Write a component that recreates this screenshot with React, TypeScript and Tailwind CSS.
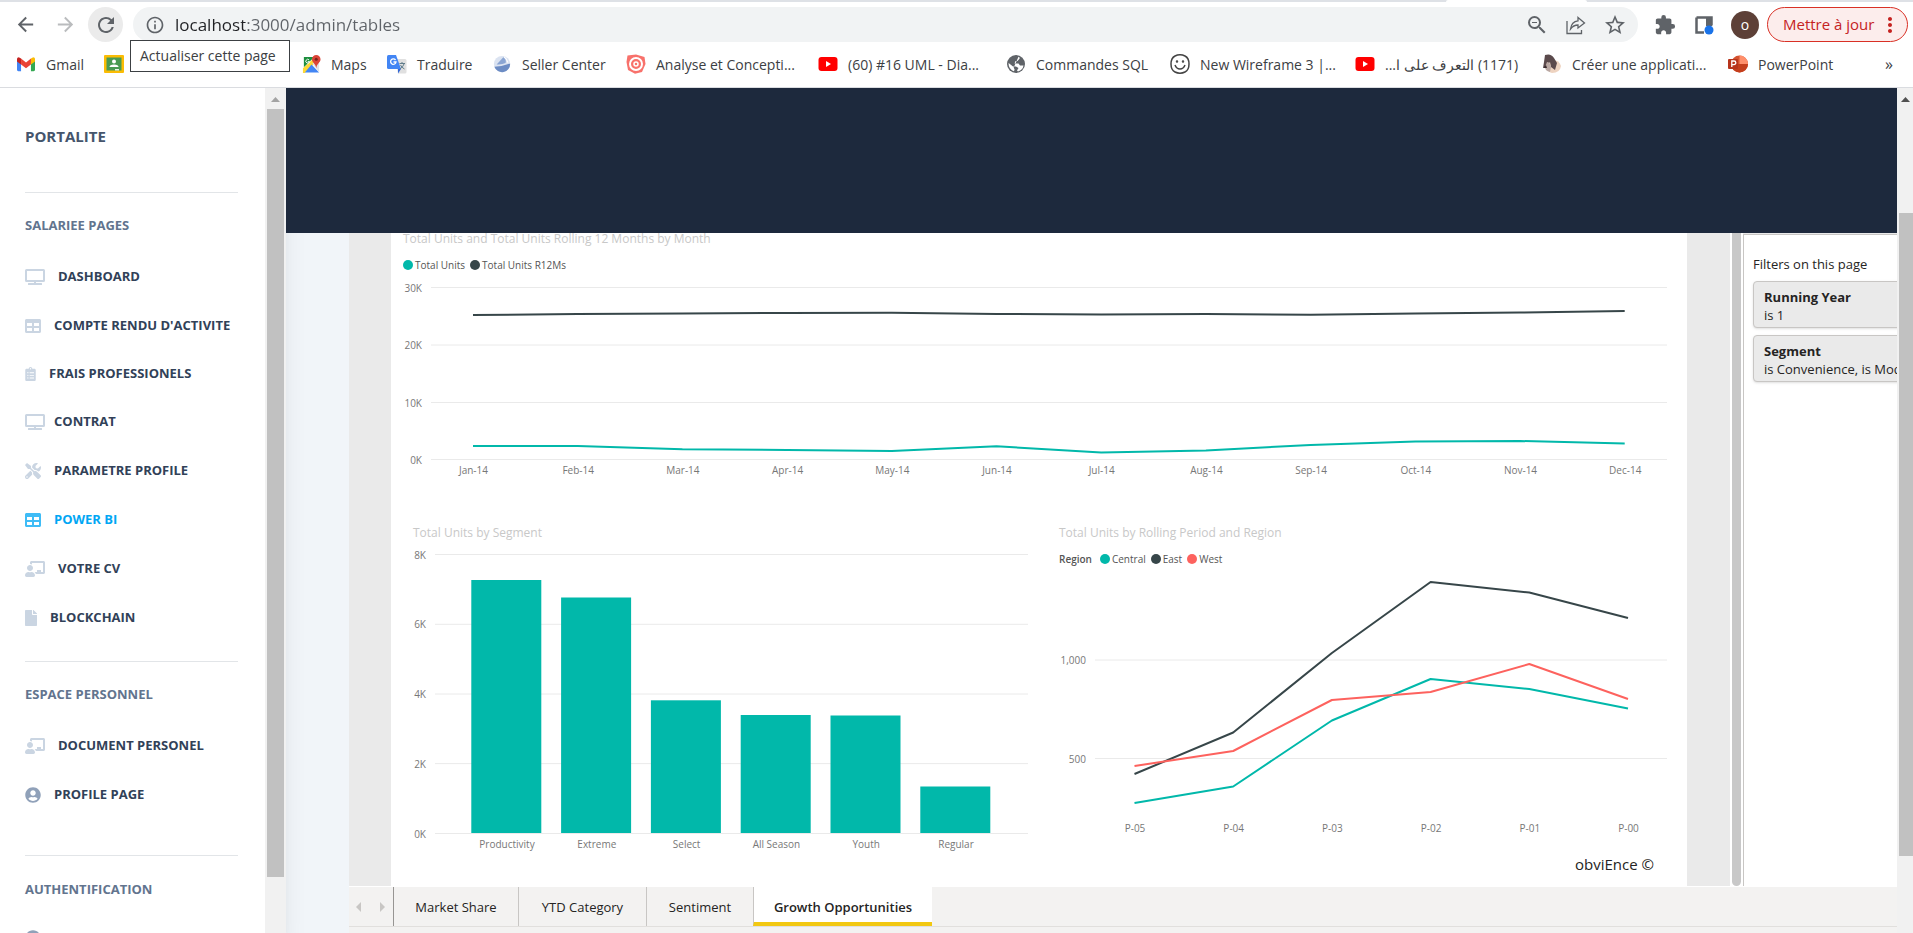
import type { ReactNode } from "react";
import type { IconType } from "react-icons";
import {
  FaChalkboardTeacher,
  FaClipboardList,
  FaFile,
  FaTable,
  FaTools,
  FaTv,
  FaUserCircle,
} from "react-icons/fa";
import {
  MdArrowBack,
  MdArrowForward,
  MdExtension,
  MdInfoOutline,
  MdMoreVert,
  MdOutlineZoomOut,
  MdRefresh,
  MdStarBorder,
} from "react-icons/md";

const TEAL = "#01b8aa";
const DARK = "#374649";
const RED = "#fd625e";

/* ---------- Browser chrome ---------- */

function GmailIcon() {
  return (
    <svg viewBox="0 0 20 16" className="h-4 w-[18px]">
      <path d="M0 2v12.5Q0 16 1.500 16H4.500V6z" fill="#4285f4" />
      <path d="M20 2v12.500Q20 16 18.500 16H15.500V6z" fill="#34a853" />
      <path d="M0 2.500Q0 .5 2 .5L4.500 2V8.500L0 5.200z" fill="#c5221f" />
      <path d="M15.500 2 18 .5Q20 .5 20 2.500V5.200L15.500 8.500z" fill="#fbbc04" />
      <path d="M4.500 2 10 6.200 15.500 2V8.500L10 12.600 4.500 8.500z" fill="#ea4335" />
    </svg>
  );
}

function ClassroomIcon() {
  return (
    <svg viewBox="0 0 20 20" className="h-5 w-5">
      <rect x="0" y="1" width="20" height="18" rx="1" fill="#fbbc04" />
      <rect x="2.500" y="3.500" width="15" height="13" fill="#4a9a52" />
      <circle cx="10" cy="7.500" r="2" fill="#fff" />
      <path d="M5.500 13q0-2.500 4.500-2.500t4.500 2.500z" fill="#fff" />
      <rect x="11" y="15" width="4" height="1.500" fill="#e8f5e9" />
    </svg>
  );
}

function MapsIcon() {
  return (
    <svg viewBox="0 0 20 20" className="h-[19px] w-[19px]">
      <path d="M2 2h11L2 13z" fill="#1e8e3e" />
      <path d="M1 14 14 2l3 3L3 19H1z" fill="#fdd835" />
      <path d="M10 10 18 18.500H3z" fill="#4285f4" />
      <path d="M11 9 18 5v13z" fill="#dfe1e5" />
      <path d="M15 0a4.500 4.500 0 0 1 4.500 4.500C19.500 8 15.500 9 15 14c-.5-5-4.500-6-4.500-9.500A4.500 4.500 0 0 1 15 0z" fill="#db4437" />
      <circle cx="15" cy="4.500" r="1.600" fill="#7b231c" />
      <path d="M7.500 5.200A2 2 0 1 0 8 7H6" fill="none" stroke="#fff" />
    </svg>
  );
}

function TranslateIcon() {
  return (
    <svg viewBox="0 0 20 20" className="h-5 w-5">
      <path d="M8 5h10q1.500 0 1.500 1.500V18q0 1.500-1.500 1.500H11z" fill="#e0e0e0" />
      <path d="M1.500 1H9l5 14H1.500Q0 15 0 13.500v-11Q0 1 1.500 1z" fill="#4285f4" />
      <path d="M11 15h3l-3 4.500z" fill="#3367d6" />
      <path d="M8.500 6A2.700 2.700 0 1 0 9 8H6.500" fill="none" stroke="#fff" strokeWidth="1.300" />
      <path d="M12.500 9.500H18M15 8v1.500M17 10q-1 3-4 5M13.500 11q1 2.500 4 4" fill="none" stroke="#607d8b" />
    </svg>
  );
}

function SellerIcon() {
  return (
    <svg viewBox="0 0 20 20" className="h-[18px] w-[18px]">
      <circle cx="10" cy="10" r="9" fill="#dbe3f1" />
      <path d="M1.500 13Q10 13 19 9.500A9 9 0 0 1 1.500 13z" fill="#6c8cc4" />
      <path d="M4 10.500 12 2q3 3 2 7-4 2-10 1.500z" fill="#8aa5d3" />
      <path d="M12 2q4 3 4.500 6.500" fill="none" stroke="#fff" strokeWidth="1.200" />
    </svg>
  );
}

function TargetIcon() {
  return (
    <svg viewBox="0 0 20 20" className="h-5 w-5">
      <path d="M1.500 1.500 10 .5 18.500 3 19.500 10 16 18l-7 1.800L2 16 .5 8z" fill="#f8716b" />
      <circle cx="10" cy="10" r="6" fill="none" stroke="#fff" strokeWidth="2" />
      <circle cx="10" cy="10" r="2" fill="none" stroke="#fff" strokeWidth="1.500" />
    </svg>
  );
}

function YoutubeIcon() {
  return (
    <svg viewBox="0 0 20 20" className="h-5 w-5">
      <rect x=".5" y="3" width="19" height="14" rx="3" fill="#f00" />
      <path d="M8 7v6l5-3z" fill="#fff" />
    </svg>
  );
}

function GlobeIcon() {
  return (
    <svg viewBox="0 0 20 20" className="h-5 w-5">
      <circle cx="10" cy="10" r="9" fill="#5f6368" />
      <path
        d="M12.500 2.800q1.500.5 1 2L11.500 7H9.500L8.500 9.500h4l1.500 2h3.500Q16.800 16 12 17.600l-1-1 1.500-2.600-2.500-1.500H7L2.600 9Q2.200 14.500 7.500 17.200l1.200-1.200-1-2.500"
        fill="#fff"
      />
    </svg>
  );
}

function SmileyIcon() {
  return (
    <svg viewBox="0 0 20 20" className="h-5 w-5" fill="none" stroke="#444" strokeWidth="1.500">
      <path d="M5 2Q10-.5 15 2q4 2 4 8t-4 8q-5 2.500-10 0-4-2-4-8t4-8z" />
      <path d="M5 11q1.500 4 5 4t5-4" />
      <circle cx="7" cy="7.500" r=".5" fill="#444" />
      <circle cx="13" cy="7.500" r=".5" fill="#444" />
    </svg>
  );
}

function PuppyIcon() {
  return (
    <svg viewBox="0 0 20 20" className="h-5 w-5">
      <path d="M9 6q8-1 10 6-1 7-9 7-5-1-4-7z" fill="#eed3c0" />
      <path d="M3 1q6-2 9 3l3 5-2 7-4-3-1-5-3 4-4 2 1-6z" fill="#5b4a4c" />
      <path d="M5 8q3 0 4 5l-1 5q-5-1-5-5z" fill="#b9a7a2" />
      <path d="M1 14 4 11l1 3z" fill="#3b2d30" />
    </svg>
  );
}

function PowerPointIcon() {
  return (
    <svg viewBox="0 0 20 20" className="h-5 w-5">
      <circle cx="11.500" cy="10" r="8.500" fill="#d35230" />
      <path d="M11.500 1.500A8.500 8.500 0 0 1 20 10h-8.500z" fill="#ff8f6b" />
      <path d="M3 10h17a8.500 8.500 0 0 1-17 0z" fill="#c43e1c" />
      <rect x="0" y="5" width="10" height="10" rx="1" fill="#b7341b" />
      <path d="M3.800 13V7h2.200a1.800 1.800 0 0 1 0 3.600H3.800" fill="none" stroke="#fff" strokeWidth="1.300" />
    </svg>
  );
}

interface Bookmark {
  label: string;
  icon: ReactNode;
  width: string;
  rtl?: boolean;
}

const bookmarks: Bookmark[] = [
  { label: "Maps", icon: <MapsIcon />, width: "w-[86px]" },
  { label: "Traduire", icon: <TranslateIcon />, width: "w-[105px]" },
  { label: "Seller Center", icon: <SellerIcon />, width: "w-[134px]" },
  { label: "Analyse et Concepti...", icon: <TargetIcon />, width: "w-[192px]" },
  { label: "(60) #16 UML - Dia...", icon: <YoutubeIcon />, width: "w-[188px]" },
  { label: "Commandes SQL", icon: <GlobeIcon />, width: "w-[164px]" },
  { label: "New Wireframe 3 |...", icon: <SmileyIcon />, width: "w-[185px]" },
  { label: "(1171) التعرف على ا...", icon: <YoutubeIcon />, width: "w-[187px]", rtl: true },
  { label: "Créer une applicati...", icon: <PuppyIcon />, width: "w-[186px]" },
  { label: "PowerPoint", icon: <PowerPointIcon />, width: "w-[110px]" },
];

function BookmarkLink({ label, icon, width, rtl }: Bookmark) {
  return (
    <a href="#" className={`flex shrink-0 items-center gap-[10px] whitespace-nowrap ${width}`}>
      <span className="flex w-5 shrink-0 justify-center">{icon}</span>
      <span dir={rtl ? "rtl" : "ltr"}>{label}</span>
    </a>
  );
}

function BrowserChrome() {
  return (
    <header className="relative shrink-0 border-b border-[#dadce0] bg-white text-[#3c4043]">
      <div className="flex h-[2px] bg-[#dee1e6]">
        <div className="ml-[1446px] w-[141px] rounded-t bg-white" />
      </div>
      <div className="flex h-[45px] items-center pl-[14px] pr-[5px]">
        <button aria-label="Précédent" className="text-[#5f6368]">
          <MdArrowBack className="h-[23px] w-[23px]" />
        </button>
        <button aria-label="Suivant" className="ml-[17px] text-[#babcbe]">
          <MdArrowForward className="h-[23px] w-[23px]" />
        </button>
        <button
          aria-label="Actualiser"
          className="ml-[11px] flex h-[35px] w-[35px] items-center justify-center rounded-full bg-[#ebebeb] text-[#5f6368]"
        >
          <MdRefresh className="h-6 w-6" />
        </button>
        <div className="ml-[10px] flex h-[35px] flex-1 items-center rounded-full bg-[#f1f3f4] pl-3 pr-[11px] text-[#5f6368]">
          <MdInfoOutline className="h-5 w-5 shrink-0" />
          <input
            aria-label="Adresse"
            type="text"
            defaultValue="localhost:3000/admin/tables"
            className="ml-[10px] flex-1 bg-[linear-gradient(90deg,#202124_70px,#5f6368_70px)] bg-clip-text text-[17px] text-transparent outline-none"
          />
          <div className="flex items-center gap-[17px]">
            <MdOutlineZoomOut className="h-6 w-6" />
            <svg viewBox="0 0 20 20" className="h-5 w-5" fill="none" stroke="#5f6368" strokeWidth="1.300">
              <path d="M1 6v12.500h14.500V15" />
              <path d="M12 2.500 18.500 8 12 13v-3Q7.500 10 4.500 14 5.500 6.500 12 5.800z" />
            </svg>
            <MdStarBorder className="h-6 w-6" />
          </div>
        </div>
        <div className="ml-4 flex items-center text-[#5f6368]">
          <MdExtension className="h-[22px] w-[22px]" />
          <svg viewBox="0 0 20 20" className="ml-[18px] h-5 w-5">
            <path d="M2.500 2.500h15v8M10 17.500H2.500v-15" fill="none" stroke="#5f6368" strokeWidth="2.500" />
            <path d="M12 2h6v9h-6z" fill="#5f6368" />
            <circle cx="15" cy="15" r="4.500" fill="#1a73e8" />
          </svg>
          <button
            aria-label="Profil"
            className="ml-[17px] flex h-7 w-7 items-center justify-center rounded-full bg-[#5d4037] text-[14px] text-white"
          >
            o
          </button>
        </div>
        <button className="ml-2 flex h-[35px] w-[141px] items-center justify-between rounded-full border border-[#d93025] bg-[#fcedec] pl-[15px] pr-[5px] text-[15px] text-[#c5221f]">
          Mettre à jour
          <MdMoreVert className="h-6 w-6" />
        </button>
      </div>
      <nav className="flex h-10 items-center pb-[6px] pl-4 pr-5 text-[14px]">
        <BookmarkLink label="Gmail" icon={<GmailIcon />} width="w-[88px]" />
        <a href="#" aria-label="Classroom" className="w-[197px] shrink-0">
          <ClassroomIcon />
        </a>
        <div className="flex">
          {bookmarks.map((b) => (
            <BookmarkLink key={b.label} {...b} />
          ))}
        </div>
        <button aria-label="Autres favoris" className="ml-auto text-[16px]">
          »
        </button>
      </nav>
      <div
        role="tooltip"
        className="absolute left-[130px] top-10 flex h-8 w-40 border border-[#3c4043] bg-white pl-[9px] pt-1 text-[14px]"
      >
        Actualiser cette page
      </div>
    </header>
  );
}

/* ---------- Sidebar ---------- */

interface NavItem {
  label: string;
  Icon: IconType;
  size: string;
  height: string;
  active?: boolean;
  tone?: string;
}

const salaryItems: NavItem[] = [
  { label: "DASHBOARD", Icon: FaTv, size: "w-5 h-5 mr-[13px]", height: "h-[49px]" },
  { label: "COMPTE RENDU D'ACTIVITE", Icon: FaTable, size: "w-4 h-4 mr-[13px]", height: "h-[49px]" },
  { label: "FRAIS PROFESSIONELS", Icon: FaClipboardList, size: "w-[11px] h-[14px] mr-[13px]", height: "h-12" },
  { label: "CONTRAT", Icon: FaTv, size: "w-5 h-5 mr-[9px]", height: "h-12" },
  { label: "PARAMETRE PROFILE", Icon: FaTools, size: "w-4 h-4 mr-[13px]", height: "h-[49px]" },
  { label: "POWER BI", Icon: FaTable, size: "w-4 h-4 mr-[13px]", height: "h-[49px]", active: true },
  { label: "VOTRE CV", Icon: FaChalkboardTeacher, size: "w-5 h-5 mr-[13px]", height: "h-[49px]" },
  { label: "BLOCKCHAIN", Icon: FaFile, size: "w-3 h-4 mr-[13px]", height: "h-[50px]" },
];

const personalItems: NavItem[] = [
  { label: "DOCUMENT PERSONEL", Icon: FaChalkboardTeacher, size: "w-5 h-5 mr-[13px]", height: "h-[49px]" },
  { label: "PROFILE PAGE", Icon: FaUserCircle, size: "w-4 h-4 mr-[13px]", height: "h-[49px]", tone: "text-slate-400" },
];

function NavList({ items }: { items: NavItem[] }) {
  return (
    <ul>
      {items.map(({ label, Icon, size, height, active, tone }) => (
        <li key={label}>
          <a
            href="#"
            className={`flex items-center whitespace-nowrap text-[13px] font-bold ${height} ${
              active ? "text-sky-500" : "text-slate-700"
            }`}
          >
            <Icon className={`shrink-0 ${size} ${active ? "opacity-75" : tone ?? "text-slate-300"}`} />
            {label}
          </a>
        </li>
      ))}
    </ul>
  );
}

function SectionTitle({ children }: { children: ReactNode }) {
  return <h6 className="h-6 text-[13px] font-bold leading-6 text-slate-500">{children}</h6>;
}

function Sidebar() {
  return (
    <aside className="z-10 flex w-[286px] shrink-0 overflow-hidden bg-white shadow-xl">
      <div className="flex-1 overflow-hidden pl-[25px] pr-[27px]">
        <a href="#" className="mt-9 block h-6 text-[15px] font-bold leading-6 text-slate-600">
          PORTALITE
        </a>
        <hr className="mt-11 border-[#e2e5e8]" />
        <div className="mt-5">
          <SectionTitle>SALARIEE PAGES</SectionTitle>
        </div>
        <div className="mt-[15px]">
          <NavList items={salaryItems} />
        </div>
        <hr className="mt-[18px] border-[#e2e5e8]" />
        <div className="mt-5">
          <SectionTitle>ESPACE PERSONNEL</SectionTitle>
        </div>
        <div className="mt-[15px]">
          <NavList items={personalItems} />
        </div>
        <hr className="mt-9 border-[#e2e5e8]" />
        <div className="mt-[21px]">
          <SectionTitle>AUTHENTIFICATION</SectionTitle>
        </div>
        <FaUserCircle className="mt-[29px] h-4 w-4 text-slate-400" />
      </div>
      <div className="flex w-[21px] flex-col items-center bg-[#f1f1f1]">
        <svg viewBox="0 0 9 5" className="mt-[9px] h-[5px] w-[9px]">
          <path d="M0 5 4.500 0 9 5z" fill="#a3a3a3" />
        </svg>
        <div className="mb-14 mt-[7px] w-[17px] flex-1 bg-[#c1c1c1]" />
      </div>
    </aside>
  );
}

/* ---------- Report ---------- */

function Legend({ title, entries }: { title?: string; entries: [string, string][] }) {
  return (
    <div className="flex h-5 items-center gap-[5px] whitespace-nowrap text-[10px] text-[#555]">
      {title && <span className="mr-[3px] font-semibold">{title}</span>}
      {entries.map(([label, color]) => (
        <span key={label} className="flex items-center gap-[2px]">
          <svg viewBox="0 0 10 10" className="h-[10px] w-[10px]">
            <circle cx="5" cy="5" r="5" fill={color} />
          </svg>
          {label}
        </span>
      ))}
    </div>
  );
}

function ChartTitle({ children }: { children: ReactNode }) {
  return <h3 className="h-5 whitespace-nowrap text-[12px] leading-5 text-[#c8c8c8]">{children}</h3>;
}

const axisText = "fill-[#777] text-[10px]";

interface PlotProps {
  label: string;
  height: number;
  width: number;
  ticks: [string, number][];
  gridFrom: number;
  gridTo: number;
  categories: string[];
  firstX: number;
  stepX: number;
  labelY: number;
  children: ReactNode;
}

function Plot(p: PlotProps) {
  return (
    <svg role="img" aria-label={p.label} viewBox={`0 0 ${p.width} ${p.height}`} className="block w-full overflow-visible">
      {p.ticks.map(([text, y]) => (
        <g key={text}>
          <path d={`M${p.gridFrom} ${y}H${p.gridTo}`} stroke="#eaeaea" />
          <text x={p.gridFrom - 9} y={y + 4} textAnchor="end" className={axisText}>
            {text}
          </text>
        </g>
      ))}
      {p.children}
      {p.categories.map((text, i) => (
        <text key={text} x={p.firstX + i * p.stepX} y={p.labelY} textAnchor="middle" className={axisText}>
          {text}
        </text>
      ))}
    </svg>
  );
}

function Series({ ys, x, step, color }: { ys: number[]; x: number; step: number; color: string }) {
  const points = ys.map((y, i) => `${x + i * step},${y}`).join(" ");
  return <polyline points={points} fill="none" stroke={color} strokeWidth="2" strokeLinejoin="round" />;
}

const months = ["Jan", "Feb", "Mar", "Apr", "May", "Jun", "Jul", "Aug", "Sep", "Oct", "Nov", "Dec"].map((m) => `${m}-14`);

function MonthlyChart() {
  return (
    <Plot
      label="Total Units by month"
      width={1272}
      height={200}
      ticks={[["30K", 8.5], ["20K", 66], ["10K", 123.5], ["0K", 180.5]]}
      gridFrom={28}
      gridTo={1264}
      categories={months}
      firstX={70.5}
      stepX={104.7}
      labelY={195}
    >
      <Series x={70} step={104.7} color={DARK} ys={[36, 35, 34.5, 34, 33.7, 35, 35.4, 35, 35.7, 34.5, 33.5, 32]} />
      <Series x={70} step={104.7} color={TEAL} ys={[167, 167, 170.2, 171, 172, 167.2, 173.6, 171.4, 166, 162.4, 162, 164.5]} />
    </Plot>
  );
}

const segmentTops = [37, 54.5, 157.3, 172, 172.5, 243.5];

function SegmentChart() {
  return (
    <Plot
      label="Total Units by segment"
      width={616}
      height={306}
      ticks={[["8K", 11.5], ["6K", 81.3], ["4K", 151], ["2K", 220.6], ["0K", 290.5]]}
      gridFrom={22}
      gridTo={615}
      categories={["Productivity", "Extreme", "Select", "All Season", "Youth", "Regular"]}
      firstX={94}
      stepX={89.8}
      labelY={305}
    >
      {segmentTops.map((top, i) => (
        <rect key={top} x={58.3 + i * 89.8} y={top} width="70" height={290 - top} fill={TEAL} />
      ))}
    </Plot>
  );
}

function RegionChart() {
  return (
    <Plot
      label="Total Units by rolling period and region"
      width={616}
      height={271}
      ticks={[["1,000", 91], ["500", 189.5]]}
      gridFrom={36}
      gridTo={608}
      categories={["P-05", "P-04", "P-03", "P-02", "P-01", "P-00"]}
      firstX={76}
      stepX={98.7}
      labelY={263}
    >
      <Series x={75.5} step={98.7} color={TEAL} ys={[234, 217.5, 151.5, 110, 120, 139.5]} />
      <Series x={75.5} step={98.7} color={DARK} ys={[205, 163.5, 84, 13, 23.5, 49]} />
      <Series x={75.5} step={98.7} color={RED} ys={[197, 182, 131, 123, 95, 130]} />
    </Plot>
  );
}

function ReportPage() {
  return (
    <div className="flex-1 bg-white px-3">
      <div className="-mt-1">
        <ChartTitle>Total Units and Total Units Rolling 12 Months by Month</ChartTitle>
      </div>
      <div className="mb-1 mt-[6px]">
        <Legend entries={[["Total Units", TEAL], ["Total Units R12Ms", DARK]]} />
      </div>
      <MonthlyChart />
      <div className="mt-11 grid grid-cols-2 gap-[30px] pl-[10px]">
        <div>
          <ChartTitle>Total Units by Segment</ChartTitle>
          <SegmentChart />
        </div>
        <div>
          <ChartTitle>Total Units by Rolling Period and Region</ChartTitle>
          <div className="mt-[6px]">
            <Legend title="Region" entries={[["Central", TEAL], ["East", DARK], ["West", RED]]} />
          </div>
          <RegionChart />
        </div>
      </div>
      <p className="mt-[3px] pr-[21px] text-right text-[15px] leading-6 text-[#252423]">obviEnce ©</p>
    </div>
  );
}

function FilterCard({ name, value }: { name: string; value: string }) {
  return (
    <div className="mb-[7px] h-[47px] w-[220px] rounded-sm border border-[#c8c6c4] bg-[#eaeaea] pl-[10px] pt-[6px] text-[13px] leading-[18px] text-[#252423] shadow-sm">
      <div className="font-bold">{name}</div>
      <div className="truncate">{value}</div>
    </div>
  );
}

function FiltersPane() {
  return (
    <div className="mt-px w-[154px] shrink-0 overflow-hidden border-l border-t border-[#c8c6c4] bg-white pl-[9px] pt-[19px]">
      <h2 className="mb-[7px] whitespace-nowrap text-[13px] leading-5 text-[#252423]">Filters on this page</h2>
      <FilterCard name="Running Year" value="is 1" />
      <FilterCard name="Segment" value="is Convenience, is Moderation" />
    </div>
  );
}

const tabs = [
  { label: "Market Share", width: "w-[125px]" },
  { label: "YTD Category", width: "w-32" },
  { label: "Sentiment", width: "w-[107px]" },
];

function PageTabs() {
  return (
    <div className="shrink-0 border-t border-white bg-[#f3f2f1] pb-[6px]">
      <div className="flex h-10 border-b border-[#e1dfdd] text-[13px] text-[#252423]">
        <div className="flex w-11 items-center justify-between pl-[7px] pr-2">
          <button aria-label="Page précédente">
            <svg viewBox="0 0 5 10" className="h-[10px] w-[5px]">
              <path d="M5 0v10L0 5z" fill="#c8c6c4" />
            </svg>
          </button>
          <button aria-label="Page suivante">
            <svg viewBox="0 0 5 10" className="h-[10px] w-[5px]">
              <path d="M0 0v10l5-5z" fill="#c8c6c4" />
            </svg>
          </button>
        </div>
        {tabs.map((t, i) => (
          <button key={t.label} className={`border-l pt-[2px] ${i === 0 ? "border-[#979593]" : "border-[#c8c6c4]"} ${t.width}`}>
            {t.label}
          </button>
        ))}
        <button className="w-[179px] border-b-4 border-l border-b-[#f2c811] border-l-[#c8c6c4] bg-white pt-[6px] font-semibold">
          Growth Opportunities
        </button>
      </div>
    </div>
  );
}

function Report() {
  return (
    <div className="ml-[63px] flex min-h-0 flex-1 flex-col">
      <div className="flex min-h-0 flex-1 overflow-hidden bg-[#eaeaea]">
        <div className="w-[42px] shrink-0" />
        <ReportPage />
        <div className="w-[43px] shrink-0" />
        <div className="flex w-[13px] shrink-0 justify-center bg-white">
          <div className="w-[9px] rounded-b-full bg-[#c8c8c8]" />
        </div>
        <FiltersPane />
      </div>
      <PageTabs />
    </div>
  );
}

function WindowScrollbar() {
  return (
    <div className="flex w-4 shrink-0 flex-col items-end bg-[#f1f1f1]">
      <svg viewBox="0 0 9 5" className="mr-[3px] mt-[9px] h-[5px] w-[9px]">
        <path d="M0 5 4.500 0 9 5z" fill="#505050" />
      </svg>
      <div className="mb-[77px] mt-[111px] w-[14px] flex-1 bg-[#c1c1c1]" />
    </div>
  );
}

export default function App() {
  return (
    <div className="flex h-screen flex-col overflow-hidden font-['Open_Sans','Noto_Sans',sans-serif]">
      <BrowserChrome />
      <div className="flex min-h-0 flex-1">
        <Sidebar />
        <main className="flex min-w-0 flex-1 flex-col bg-slate-100">
          <div className="z-20 h-[145px] shrink-0 bg-slate-800" />
          <Report />
        </main>
        <WindowScrollbar />
      </div>
    </div>
  );
}
